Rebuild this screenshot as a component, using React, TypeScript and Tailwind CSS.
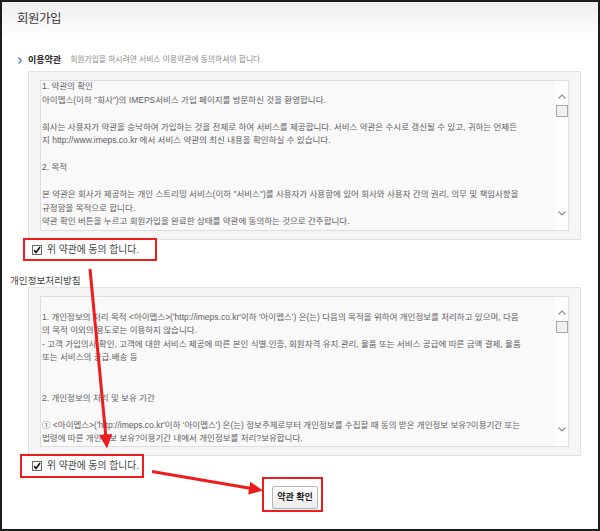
import React from 'react'

const termsLines = [
  '1. 약관의 확인',
  '아이멥스(이하 "회사")의 IMEPS서비스 가입 페이지를 방문하신 것을 환영합니다.',
  '',
  '회사는 사용자가 약관을 승낙하여 가입하는 것을 전제로 하여 서비스를 제공합니다. 서비스 약관은 수시로 갱신될 수 있고, 귀하는 언제든',
  '지 http://www.imeps.co.kr 에서 서비스 약관의 최신 내용을 확인하실 수 있습니다.',
  '',
  '2. 목적',
  '',
  '본 약관은 회사가 제공하는 개인 스트리밍 서비스(이하 "서비스")를 사용자가 사용함에 있어 회사와 사용자 간의 권리, 의무 및 책임사항을',
  '규정함을 목적으로 합니다.',
  '약관 확인 버튼을 누르고 회원가입을 완료한 상태를 약관에 동의하는 것으로 간주합니다.',
  '',
]

const privacyLines = [
  '',
  "1. 개인정보의 처리 목적 <아이멥스>('http://imeps.co.kr'이하 '아이멥스') 은(는) 다음의 목적을 위하여 개인정보를 처리하고 있으며, 다음",
  '의 목적 이외의 용도로는 이용하지 않습니다.',
  '- 고객 가입의사 확인, 고객에 대한 서비스 제공에 따른 본인 식별.인증, 회원자격 유지.관리, 물품 또는 서비스 공급에 따른 금액 결제, 물품',
  '또는 서비스의 공급.배송 등',
  '',
  '',
  '2. 개인정보의 처리 및 보유 기간',
  '',
  "① <아이멥스>('http://imeps.co.kr'이하 '아이멥스') 은(는) 정보주체로부터 개인정보를 수집할 때 동의 받은 개인정보 보유?이용기간 또는",
  '법령에 따른 개인정보 보유?이용기간 내에서 개인정보를 처리?보유합니다.',
  '',
]

function Chevron({ down }: { down?: boolean }) {
  return (
    <svg width="8" height="5" viewBox="0 0 8 5" className="block">
      <path
        d={down ? 'M0.5 0.5 L4 4 L7.5 0.5' : 'M0.5 4.5 L4 1 L7.5 4.5'}
        fill="none"
        stroke="#8a8a8a"
        strokeWidth="1.1"
      />
    </svg>
  )
}

function TermsBox({ lines, offset }: { lines: string[]; offset: string }) {
  return (
    <div className="ml-[26px] w-[553px] h-[169px] border border-[#e3e3e3] bg-[#f5f5f5] pt-[8px] pl-[11px]">
      <div className="w-[529px] h-[151px] border border-[#dedede] bg-[#f9f9f9] flex overflow-hidden">
        <div className={`flex-1 overflow-hidden pl-[1px] text-[8.5px] leading-[13.5px] text-[#606060] ${offset}`}>
          {lines.map((line, i) => (
            <div key={i} className="whitespace-nowrap h-[13.5px]">
              {line}
            </div>
          ))}
        </div>
        <div className="w-[13px] bg-[#fdfdfd] flex flex-col items-center pt-[13px] pb-[14px]">
          <Chevron />
          <div className="mt-[6px] w-[12px] h-[12px] border border-[#a8a8a8] bg-[#f0f0f0]" />
          <div className="flex-1" />
          <Chevron down />
        </div>
      </div>
    </div>
  )
}

function CheckBox() {
  return (
    <div className="w-[10px] h-[10px] border border-[#6a6a6a] bg-white flex items-center justify-center">
      <svg width="8" height="8" viewBox="0 0 8 8" className="block">
        <path d="M1 4.2 L3 6.4 L7 1" fill="none" stroke="#111" strokeWidth="1.6" />
      </svg>
    </div>
  )
}

function AgreeRow({ className }: { className: string }) {
  return (
    <div className={`border-2 border-[#ee1c1c] flex items-center ${className}`}>
      <CheckBox />
      <span className="ml-[5px] text-[9.8px] leading-[12px] text-[#444]">위 약관에 동의 합니다.</span>
    </div>
  )
}

export default function App() {
  return (
    <div className="relative w-[600px] h-[531px] overflow-hidden border-2 border-[#1c1c1c] bg-white font-['Liberation_Sans','Noto_Sans_CJK_KR',sans-serif]">
      {/* Header */}
      <div className="h-[38px] pt-[9px] pl-[15px] bg-linear-to-b from-[#efefef] to-white">
        <h1 className="text-[12.5px] leading-[16px] tracking-[-0.5px] text-[#3a3a3a]">회원가입</h1>
      </div>

      {/* Section title */}
      <div className="mt-[13px] h-[14px] flex items-center">
        <svg width="4" height="7" viewBox="0 0 4 7" className="ml-[16px] block">
          <path d="M0.5 0.5 L3.3 3.5 L0.5 6.5" fill="none" stroke="#4f7fb8" strokeWidth="1.2" />
        </svg>
        <span className="ml-[6px] text-[9px] font-bold text-[#2a2a2a] leading-[14px]">이용약관</span>
        <span className="ml-[9px] text-[7.8px] text-[#8a8a8a] leading-[14px]">
          회원가입을 하시려면 서비스 이용약관에 동의하셔야 합니다.
        </span>
      </div>

      <div className="mt-[4px]">
        <TermsBox lines={termsLines} offset="-mt-[1px]" />
      </div>

      <AgreeRow className="-mt-[2px] ml-[21px] w-[134px] h-[23px] pl-[7px]" />

      <div className="mt-[14px] pl-[8px] text-[9.6px] leading-[12px] text-[#444]">개인정보처리방침</div>

      <TermsBox lines={privacyLines} offset="" />

      <AgreeRow className="-mt-[2px] ml-[18px] w-[124px] h-[24px] pl-[10px]" />

      <div className="-mt-[1px] ml-[260px] w-[61px] h-[35px] border-2 border-[#ee1c1c] pl-[8px] pt-[4px]">
        <button className="w-[46px] h-[23px] border border-[#b5b5b5] rounded-[2px] bg-linear-to-b from-white to-[#ebebeb] text-[9px] font-bold text-[#222] leading-[21px]">
          약관 확인
        </button>
      </div>

      {/* Annotation arrows */}
      <svg
        className="absolute -left-[2px] -top-[2px] pointer-events-none"
        width="600"
        height="531"
        viewBox="0 0 600 531"
      >
        <line x1="90" y1="269" x2="105.8" y2="436" stroke="#ee1c1c" strokeWidth="3" />
        <polygon points="107,448.5 112.2,434 99.2,435.2" fill="#ee1c1c" />
        <line x1="152" y1="471.5" x2="250" y2="488.3" stroke="#ee1c1c" strokeWidth="3" />
        <polygon points="263,490.5 248.1,494.5 250.3,481.7" fill="#ee1c1c" />
      </svg>
    </div>
  )
}
